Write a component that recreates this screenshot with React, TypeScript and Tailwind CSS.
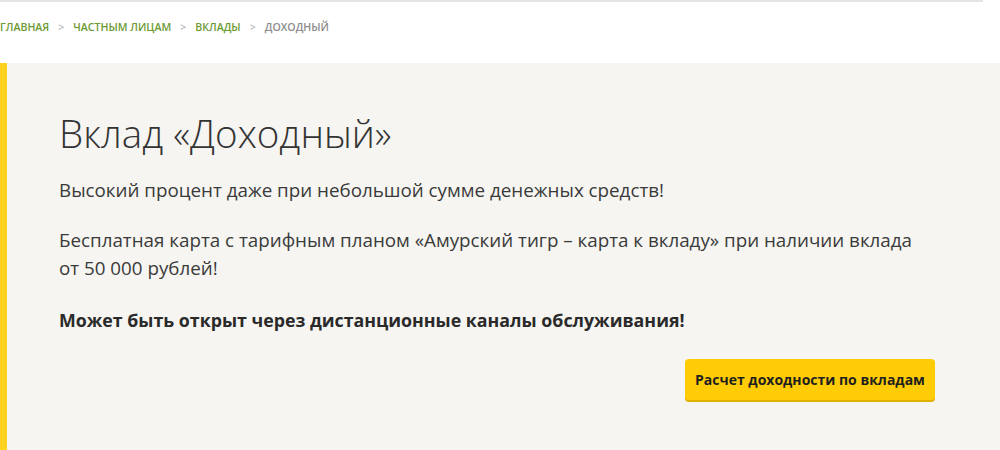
export default function App() {
  const crumbs = [
    { label: "Главная", href: "#" },
    { label: "Частным лицам", href: "#" },
    { label: "Вклады", href: "#" },
  ];

  return (
    <div className="h-[450px] w-[1000px] overflow-hidden bg-white font-['Open_Sans',sans-serif]">
      <div className="h-[2px] w-[983px] bg-[#e4e4e4]" />

      <nav className="flex h-[61px] items-start pt-[18px] text-[10.6px] font-semibold uppercase">
        {crumbs.map((c) => (
          <span key={c.label} className="flex items-center">
            <a href={c.href} className="text-[#6c9a33]">
              {c.label}
            </a>
            <span className="mx-[9px] text-[#b5b5b5]">&gt;</span>
          </span>
        ))}
        <span className="text-[#8c8c8c]">Доходный</span>
      </nav>

      <section className="flex h-[387px]">
        <div className="w-[7px] shrink-0 bg-[#ffd21f]" />
        <div className="flex flex-1 flex-col bg-[#f6f5f1] pl-[52px] pr-[65px] pt-[47px] text-[#3a3a3a]">
          <h1 className="text-[38.5px] font-light leading-[46px] text-[#333]">Вклад «Доходный»</h1>
          <p className="mt-[20px] text-[18.8px] leading-[28px]">
            Высокий процент даже при небольшой сумме денежных средств!
          </p>
          <p className="mt-[22px] max-w-[870px] text-[18.8px] leading-[28px]">
            Бесплатная карта с тарифным планом «Амурский тигр – карта к вкладу» при наличии вклада от 50 000 рублей!
          </p>
          <p className="mt-[24px] text-[17.8px] font-bold leading-[28px] text-[#2a2a2a]">
            Может быть открыт через дистанционные каналы обслуживания!
          </p>
          <div className="mt-[25px] flex justify-end">
            <button
              type="button"
              className="h-[41px] w-[250px] rounded-[4px] bg-[#ffcc05] text-[14px] font-bold text-[#1f1f1f] shadow-[0_2px_0_#e0b000]"
            >
              Расчет доходности по вкладам
            </button>
          </div>
        </div>
      </section>
    </div>
  );
}
